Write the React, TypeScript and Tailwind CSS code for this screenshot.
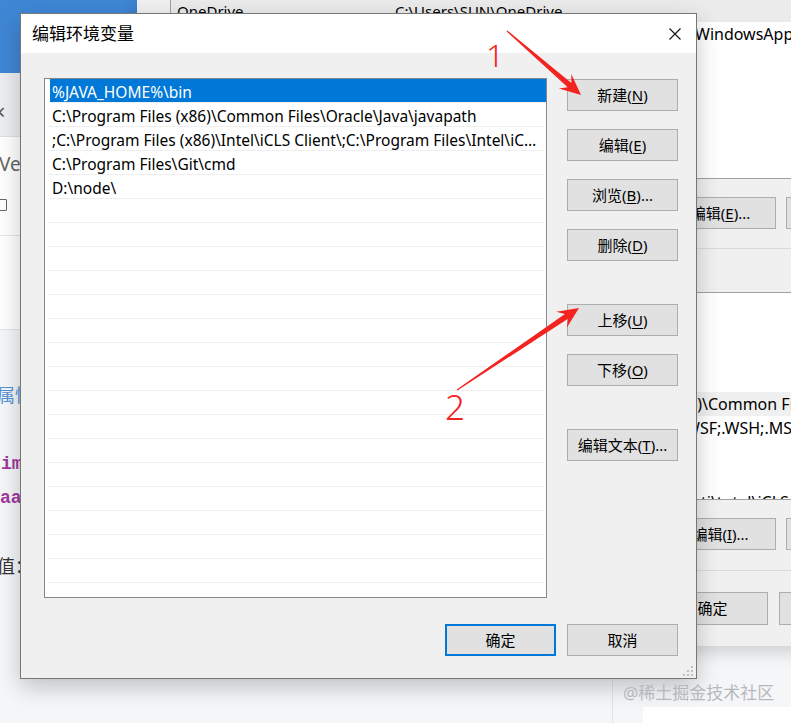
import React from 'react'

const pathRows = [
  '%JAVA_HOME%\\bin',
  'C:\\Program Files (x86)\\Common Files\\Oracle\\Java\\javapath',
  ';C:\\Program Files (x86)\\Intel\\iCLS Client\\;C:\\Program Files\\Intel\\iCLS Client\\;%SystemRoot%\\system32',
  'C:\\Program Files\\Git\\cmd',
  'D:\\node\\',
]

const sideButtons = [
  { label: '新建', k: 'N', dots: '', gap: '' },
  { label: '编辑', k: 'E', dots: '', gap: 'mt-[18px]' },
  { label: '浏览', k: 'B', dots: '...', gap: 'mt-[18px]' },
  { label: '删除', k: 'D', dots: '', gap: 'mt-[18px]' },
  { label: '上移', k: 'U', dots: '', gap: 'mt-[43px]' },
  { label: '下移', k: 'O', dots: '', gap: 'mt-[18px]' },
  { label: '编辑文本', k: 'T', dots: '...', gap: 'mt-[43px]' },
]

function WinButton({ children, className = '' }: { children: React.ReactNode; className?: string }) {
  return (
    <div className={`h-[32px] w-[111px] shrink-0 flex items-center justify-center border border-[#adadad] bg-[#e1e1e1] text-[15px] text-black ${className}`}>
      {children}
    </div>
  )
}

function Acc({ label, k, dots }: { label: string; k: string; dots?: string }) {
  return (
    <span>
      {label}(<span className="underline underline-offset-2">{k}</span>){dots}
    </span>
  )
}

// tapered red arrow, computed from tail and tip
function arrowPoints(tx: number, ty: number, hx: number, hy: number) {
  const headLen = 21
  const headW = 19
  const dx = hx - tx
  const dy = hy - ty
  const L = Math.hypot(dx, dy)
  const ux = dx / L
  const uy = dy / L
  const nx = -uy
  const ny = ux
  const neckX = hx - ux * headLen * 0.72
  const neckY = hy - uy * headLen * 0.72
  const baseX = hx - ux * headLen
  const baseY = hy - uy * headLen
  const p = [
    [tx + nx * 0.6, ty + ny * 0.6],
    [neckX + nx * 2.8, neckY + ny * 2.8],
    [baseX + nx * headW / 2, baseY + ny * headW / 2],
    [hx, hy],
    [baseX - nx * headW / 2, baseY - ny * headW / 2],
    [neckX - nx * 2.8, neckY - ny * 2.8],
    [tx - nx * 0.6, ty - ny * 0.6],
  ]
  return p.map(([x, y]) => `${x.toFixed(1)},${y.toFixed(1)}`).join(' ')
}

function EditorWindow() {
  return (
    <div className="absolute left-0 top-0 w-[137px] h-[723px] flex flex-col overflow-hidden">
      <div className="h-[73px] bg-[#3f87d5] shrink-0" />
      <div className="h-[64px] shrink-0 bg-[#eceef1] border-b border-[#dde0e4] relative">
        <span className="absolute left-[-7px] top-[27px] text-[22px] leading-none text-[#555]">×</span>
      </div>
      <div className="h-[99px] shrink-0 bg-white border-b border-[#e3e5e8] flex flex-col pt-[16px]">
        <span className="ml-[-1px] text-[19px] leading-[22px] text-[#666]">Vector</span>
        <div className="ml-[-6px] mt-[24px] w-[13px] h-[12px] border border-[#666] rounded-[1px]" />
      </div>
      <div className="h-[94px] shrink-0 bg-white border-b border-[#e3e5e8]" />
      <div className="flex-1 bg-[#f5f6f8] flex flex-col pt-[54px]">
        <span className="ml-[-3px] text-[18px] leading-[22px] text-[#5692d6]">属性</span>
        <span className="ml-[1px] mt-[47px] font-['Liberation_Mono',monospace] font-bold text-[18px] leading-[22px] text-[#a0399f]">import</span>
        <span className="ml-[0px] mt-[12px] font-['Liberation_Mono',monospace] font-bold text-[18px] leading-[22px] text-[#a0399f]">aaa</span>
        <span className="ml-[-3px] mt-[46px] text-[18px] leading-[22px] text-[#333]">值：</span>
      </div>
    </div>
  )
}

function EnvWindow() {
  return (
    <div className="absolute left-[137px] top-0 w-[780px] h-[646px] bg-[#f0f0f0] flex flex-col pl-[33px] shadow-[0_6px_16px_rgba(0,0,0,0.16)] text-[16px] text-black">
      <div className="h-[179px] shrink-0 bg-white border-l border-b border-[#a0a0a0] flex flex-col overflow-hidden">
        <div className="h-[22px] shrink-0 bg-[#ebebeb] grid grid-cols-[218px_1fr] pl-[6px] items-center whitespace-nowrap text-[15px]">
          <span>OneDrive</span>
          <span>C:\Users\SUN\OneDrive</span>
        </div>
        <div className="h-[24px] shrink-0 grid grid-cols-[218px_1fr] pl-[6px] items-center whitespace-nowrap">
          <span>Path</span>
          <span className="pl-[300px]">WindowsApps</span>
        </div>
      </div>
      <div className="mt-[18px] flex gap-[10px] pl-[374px]">
        <WinButton>新建(N)...</WinButton>
        <WinButton><Acc label="编辑" k="E" dots="..." /></WinButton>
        <WinButton>删除(L)</WinButton>
      </div>
      <div className="h-[20px] shrink-0 border-b border-[#dadada]" />
      <div className="mt-[43px] h-[208px] shrink-0 bg-white border-l border-t border-b border-[#a0a0a0] flex flex-col overflow-hidden whitespace-nowrap">
        <div className="h-[99px] shrink-0" />
        <div className="h-[24px] shrink-0 bg-[#f0f0f0] flex items-center pl-[517px]">6)\Common Files\Oracle\Java\javapath</div>
        <div className="h-[24px] shrink-0 flex items-center pl-[514px]">WSF;.WSH;.MSC</div>
        <div className="h-[24px] shrink-0" />
        <div className="h-[26px] shrink-0" />
        <div className="h-[24px] shrink-0 flex items-center pl-[530px]">ti\tntel\iCLS Client\</div>
      </div>
      <div className="mt-[18px] flex gap-[10px] pl-[374px]">
        <WinButton>新建(W)...</WinButton>
        <WinButton><Acc label="编辑" k="I" dots="..." /></WinButton>
        <WinButton>删除(L)</WinButton>
      </div>
      <div className="h-[21px] shrink-0 border-b border-[#dadada]" />
      <div className="mt-[21px] flex gap-[11px] pl-[487px]">
        <WinButton className="h-[33px]">确定</WinButton>
        <WinButton className="h-[33px]">取消</WinButton>
      </div>
    </div>
  )
}

function EditDialog() {
  const emptyRows = Array.from({ length: 17 }, (_, i) => i)
  return (
    <div className="absolute left-[20px] top-[13px] w-[677px] h-[666px] flex flex-col border border-[#777] bg-[#f0f0f0] shadow-[0_8px_22px_rgba(0,0,0,0.22)]">
      <div className="h-[39px] shrink-0 bg-white flex items-center justify-between pl-[11px] pr-[15px]">
        <span className="text-[17px] text-black">编辑环境变量</span>
        <svg width="12" height="12" viewBox="0 0 12 12">
          <path d="M0.5 0.5 L11.5 11.5 M11.5 0.5 L0.5 11.5" stroke="#111" strokeWidth="1.1" fill="none" />
        </svg>
      </div>
      <div className="flex-1 flex flex-col pl-[23px] pr-[18px] pt-[25px] relative">
        <div className="flex gap-[20px]">
          <div className="w-[503px] h-[520px] shrink-0 bg-white border border-[#828790] flex flex-col px-[3px] overflow-hidden text-[15.5px]">
            {pathRows.map((r, i) => (
              <div
                key={i}
                className={`h-[24px] shrink-0 flex items-center pt-[5px] border-b border-[#efefef] whitespace-nowrap ${
                  i === 0 ? 'bg-[#0078d7] text-white ml-[2px] -mr-[3px] pl-[2px]' : 'text-black pl-[4px]'
                }`}
              >
                <span className="truncate">{r}</span>
              </div>
            ))}
            {emptyRows.map((i) => (
              <div key={'e' + i} className="h-[24px] shrink-0 border-b border-[#efefef]" />
            ))}
          </div>
          <div className="flex flex-col pt-[1px]">
            {sideButtons.map((b) => (
              <WinButton key={b.k} className={b.gap}>
                <Acc label={b.label} k={b.k} dots={b.dots} />
              </WinButton>
            ))}
          </div>
        </div>
        <div className="mt-[26px] flex justify-end gap-[11px]">
          <div className="h-[32px] w-[111px] flex items-center justify-center border-2 border-[#0078d7] bg-[#e1e1e1] text-[15px] text-black">确定</div>
          <WinButton>取消</WinButton>
        </div>
        <svg className="absolute right-[2px] bottom-[1px]" width="11" height="11" viewBox="0 0 11 11">
          <rect x="8" y="0" width="2" height="2" fill="#bdbdbd" />
          <rect x="4" y="4" width="2" height="2" fill="#bdbdbd" />
          <rect x="8" y="4" width="2" height="2" fill="#bdbdbd" />
          <rect x="0" y="8" width="2" height="2" fill="#bdbdbd" />
          <rect x="4" y="8" width="2" height="2" fill="#bdbdbd" />
          <rect x="8" y="8" width="2" height="2" fill="#bdbdbd" />
        </svg>
      </div>
    </div>
  )
}

export default function App() {
  return (
    <div className="relative w-[791px] h-[723px] overflow-hidden bg-[#f5f6f8] font-['Noto_Sans','Noto_Sans_CJK_SC',sans-serif]">
      <EditorWindow />
      {/* strip under the back windows */}
      <div className="absolute left-[612px] top-[646px] w-[1px] h-[77px] bg-[#e1e3e6]" />
      <div className="absolute left-[643px] top-[707px] w-[148px] h-[16px] bg-white" />
      <EnvWindow />
      <EditDialog />

      {/* annotations */}
      <svg className="absolute left-0 top-0 pointer-events-none" width="791" height="723">
        <polygon points={arrowPoints(507, 31, 581, 95)} fill="#f3231f" />
        <polygon points={arrowPoints(457, 390, 579, 308)} fill="#f3231f" />
      </svg>
      <span className="absolute left-[486px] top-[39px] text-[32px] leading-none font-light text-[#f3231f]">1</span>
      <span className="absolute left-[445px] top-[389px] text-[35px] leading-none font-light text-[#f3231f]">2</span>
      <span className="absolute left-[623px] top-[681px] text-[17px] leading-[24px] text-[#b5b9be]">@稀土掘金技术社区</span>
    </div>
  )
}
